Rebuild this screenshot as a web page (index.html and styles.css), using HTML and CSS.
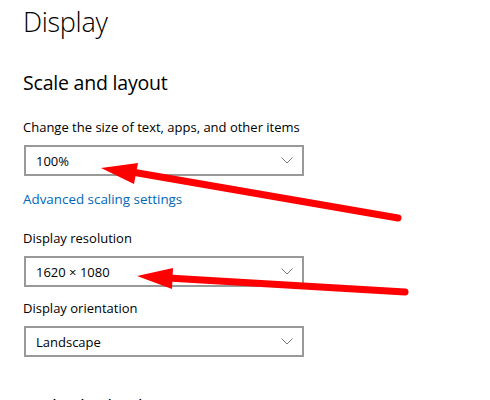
FILE: index.html
```html
<!DOCTYPE html>
<html lang="en">
<head>
<meta charset="utf-8">
<title>Display</title>
<link rel="stylesheet" href="styles.css">
</head>
<body>
<main class="page">
  <h1 class="title">Display</h1>
  <h2 class="section">Scale and layout</h2>
  <div class="label first">Change the size of text, apps, and other items</div>
  <div class="select"><span>100%</span><svg class="chev" width="12" height="7" viewBox="0 0 12 7"><path d="M0.5 0.5 L6 6 L11.5 0.5" fill="none" stroke="#777" stroke-width="1"/></svg></div>
  <a class="link" href="#">Advanced scaling settings</a>
  <div class="label">Display resolution</div>
  <div class="select"><span>1620 × 1080</span><svg class="chev" width="12" height="7" viewBox="0 0 12 7"><path d="M0.5 0.5 L6 6 L11.5 0.5" fill="none" stroke="#777" stroke-width="1"/></svg></div>
  <div class="label tight">Display orientation</div>
  <div class="select"><span>Landscape</span><svg class="chev" width="12" height="7" viewBox="0 0 12 7"><path d="M0.5 0.5 L6 6 L11.5 0.5" fill="none" stroke="#777" stroke-width="1"/></svg></div>
  <h2 class="section last">Multiple displays</h2>
</main>
<svg class="arrows" width="490" height="400" viewBox="0 0 490 400">
  <line x1="132" y1="172" x2="398" y2="218" stroke="#ff0000" stroke-width="7" stroke-linecap="round"/>
  <polygon points="101,168 138,163 134,184" fill="#ff0000"/>
  <line x1="168" y1="278" x2="405" y2="292" stroke="#ff0000" stroke-width="7" stroke-linecap="round"/>
  <polygon points="137,276 173,268 172,289" fill="#ff0000"/>
</svg>
</body>
</html>
```
FILE: styles.css
```css
html, body {
  margin: 0;
  padding: 0;
  background: #ffffff;
  overflow: hidden;
}
body {
  width: 490px;
  height: 400px;
  position: relative;
  font-family: "Open Sans", "Noto Sans", sans-serif;
  color: #000;
}
.page {
  padding: 4px 0 0 23px;
  display: flex;
  flex-direction: column;
  align-items: flex-start;
}
.title {
  margin: 0;
  font-size: 27px;
  font-weight: 300;
  line-height: 36px;
  letter-spacing: -0.3px;
}
.section {
  margin: 29px 0 0 0;
  font-size: 19.5px;
  font-weight: 400;
  line-height: 28px;
  letter-spacing: -0.2px;
}
.section.last {
  margin-top: 36px;
}
.label {
  margin-top: 19px;
  font-size: 13px;
  line-height: 20px;
}
.label.first {
  margin-top: 20px;
}
.label.tight {
  margin-top: 11px;
}
.select {
  margin: 8px 0 0 1px;
  box-sizing: border-box;
  width: 280px;
  height: 31px;
  border: 2px solid #999999;
  display: flex;
  align-items: center;
  justify-content: space-between;
  padding: 0 9px 0 10px;
  font-size: 13px;
}
.chev {
  display: block;
}
.link {
  margin-top: 13px;
  font-size: 13.4px;
  line-height: 20px;
  color: #0067b8;
  text-decoration: none;
}
.arrows {
  position: absolute;
  left: 0;
  top: 0;
  pointer-events: none;
}
```
